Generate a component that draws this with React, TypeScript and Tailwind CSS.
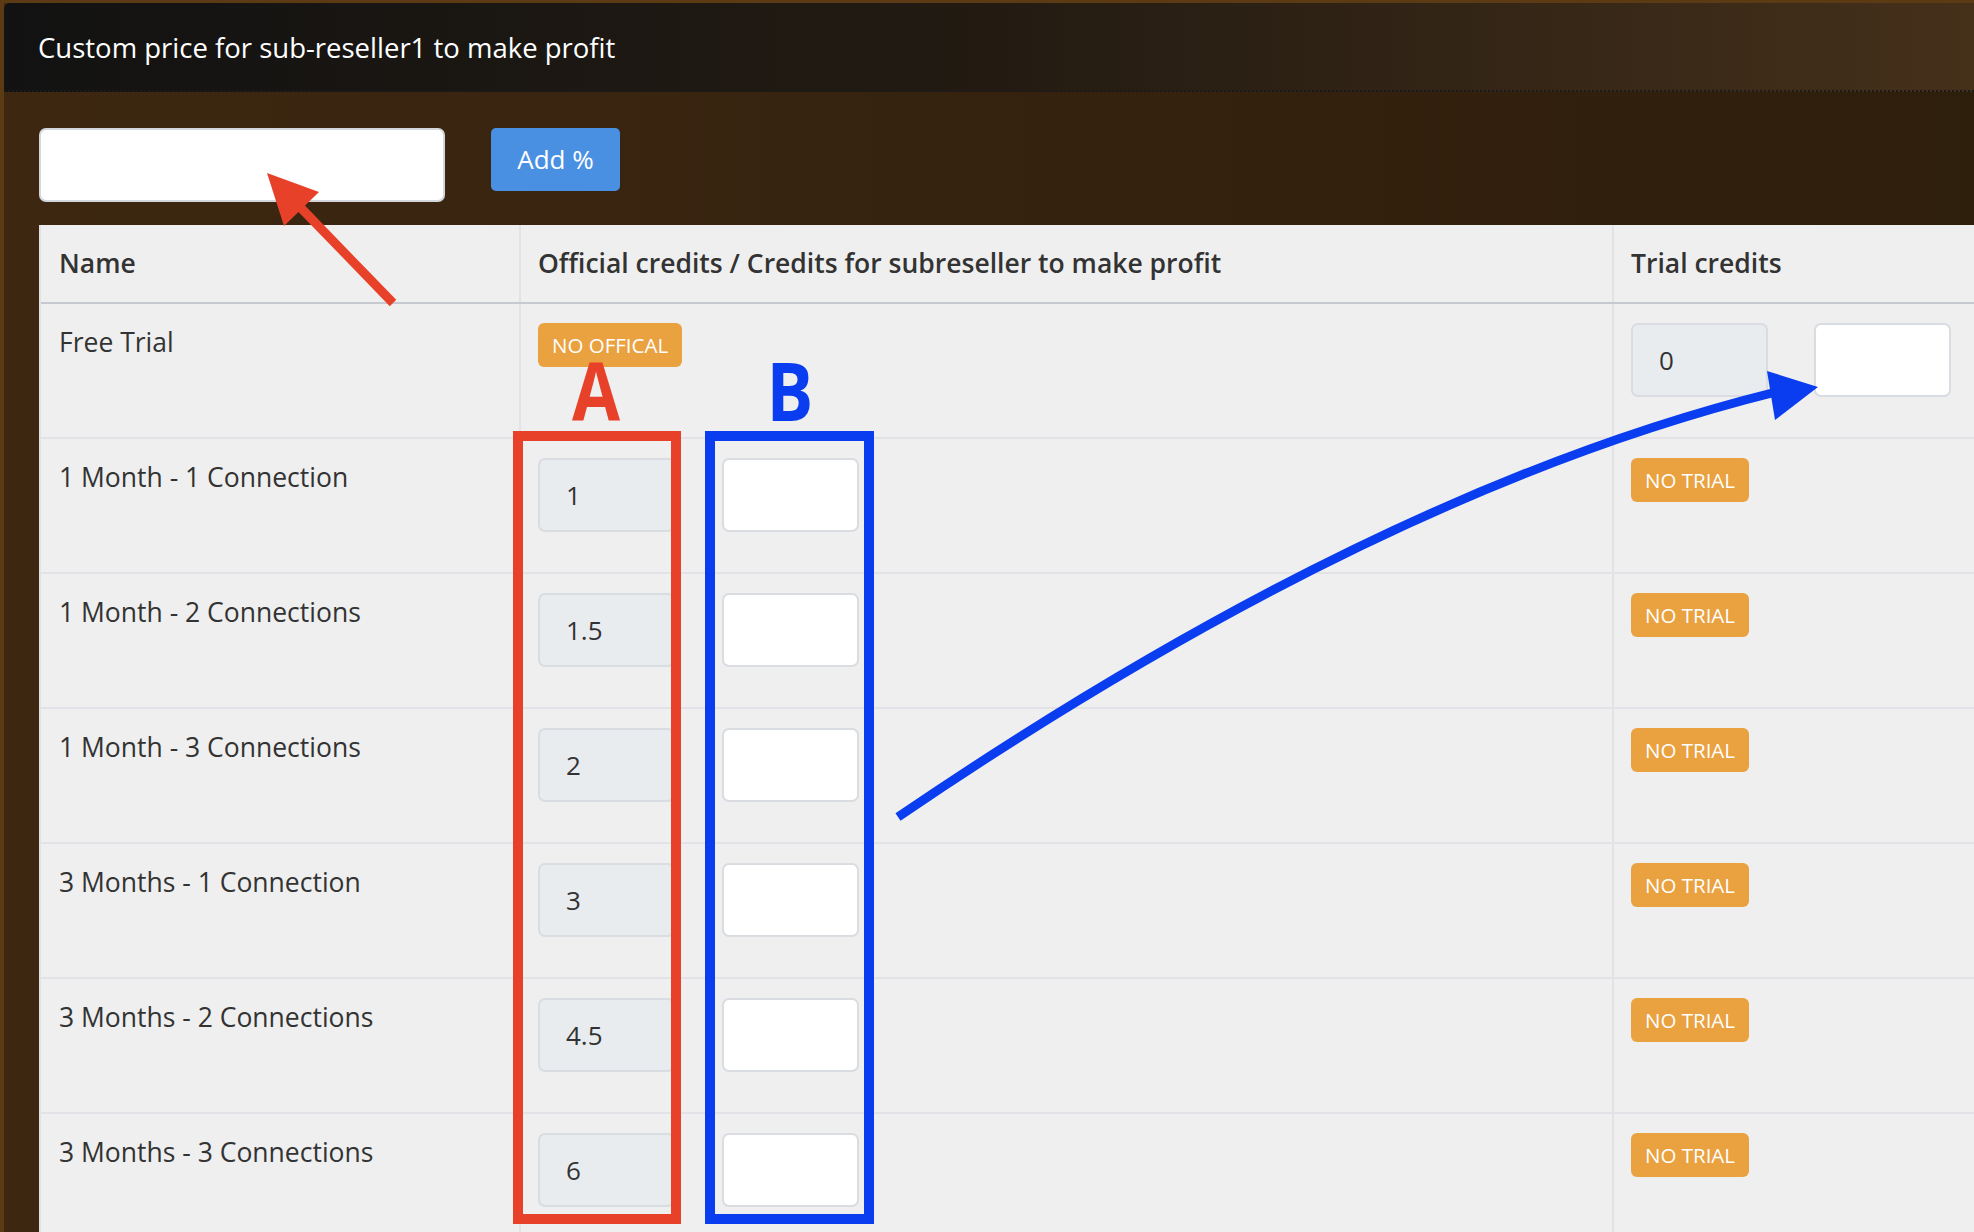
import React from "react";

interface PriceRow {
  name: string;
  official: string | null;
  trial: string | null;
}

const rows: PriceRow[] = [
  { name: "Free Trial", official: null, trial: "0" },
  { name: "1 Month - 1 Connection", official: "1", trial: null },
  { name: "1 Month - 2 Connections", official: "1.5", trial: null },
  { name: "1 Month - 3 Connections", official: "2", trial: null },
  { name: "3 Months - 1 Connection", official: "3", trial: null },
  { name: "3 Months - 2 Connections", official: "4.5", trial: null },
  { name: "3 Months - 3 Connections", official: "6", trial: null },
];

function Badge({ label }: { label: string }) {
  return (
    <span className="inline-flex h-[44px] items-center rounded-[6px] bg-[#eaa140] px-[14px] text-[20.5px] leading-none text-white">
      {label}
    </span>
  );
}

function ReadonlyInput({ value }: { value: string }) {
  return (
    <input
      readOnly
      value={value}
      className="h-[74px] w-[137px] rounded-[7px] border-2 border-[#d9dce0] bg-[#e9ecef] pl-[26px] text-[26px] text-[#333] outline-none"
    />
  );
}

function EmptyInput() {
  return (
    <input className="h-[74px] w-[137px] rounded-[7px] border-2 border-[#d9dce0] bg-white pl-[26px] text-[26px] text-[#333] outline-none" />
  );
}

// hand-drawn markup that sits over the screenshot
function Annotations() {
  return (
    <>
      <div className="pointer-events-none absolute left-[513px] top-[431px] h-[793px] w-[168px] border-[10px] border-[#e8412a]" />
      <div className="pointer-events-none absolute left-[705px] top-[431px] h-[793px] w-[169px] border-[10px] border-[#0a3cf0]" />
      <div className="pointer-events-none absolute left-[546px] top-[349px] w-[100px] scale-x-[0.86] text-center font-['Open_Sans',sans-serif] text-[81px] font-bold leading-[81px] text-[#e8412a]">
        A
      </div>
      <div className="pointer-events-none absolute left-[740px] top-[349px] w-[100px] scale-x-[0.86] text-center font-['Open_Sans',sans-serif] text-[81px] font-bold leading-[81px] text-[#0a3cf0]">
        B
      </div>
      <svg
        className="pointer-events-none absolute left-0 top-0"
        width="1974"
        height="1232"
        viewBox="0 0 1974 1232"
      >
        <line x1="393" y1="303" x2="300" y2="207" stroke="#e8412a" strokeWidth="9" />
        <polygon points="267,173 319,192 284,226" fill="#e8412a" />
        <path d="M 898 817 Q 1377 491 1776 392" stroke="#0a3cf0" strokeWidth="9" fill="none" />
        <polygon points="1818,387 1767,371 1775,420" fill="#0a3cf0" />
      </svg>
    </>
  );
}

export default function App() {
  return (
    <div className="relative h-[1232px] w-[1974px] overflow-hidden">
      <div className="h-full w-full border-l-4 border-t-[3px] border-[#5c3b14] bg-linear-to-r from-[#3d2711] to-[#2e1e0c] font-['Open_Sans',sans-serif]">
        <div className="flex h-[89px] items-center rounded-tl-[6px] border-b-2 border-dotted border-[#1c1a18] bg-linear-to-r from-[#121212] via-[#231b12] to-[#45301a] pl-[34px] pt-[2px]">
          <h1 className="text-[27.5px] font-medium text-white">Custom price for sub-reseller1 to make profit</h1>
        </div>

        <div className="pl-[35px] pt-[36px]">
          <div className="flex items-start gap-[46px]">
            <input className="h-[74px] w-[406px] rounded-[7px] border-2 border-[#d3d6da] bg-white outline-none" />
            <button className="h-[63px] w-[129px] rounded-[5px] bg-[#4a90e2] text-[26px] text-white">Add %</button>
          </div>

          <div className="mt-[23px] border-l-2 border-[#e2e2e6] bg-[#efefef] text-[#333]">
            <div className="grid h-[79px] grid-cols-[478px_1093px_1fr] border-b-2 border-[#c6cad0] text-[26.5px] font-semibold">
              <div className="flex items-center pl-[18px]">Name</div>
              <div className="flex items-center border-l-2 border-[#e3e3e7] pl-[17px]">
                Official credits / Credits for subreseller to make profit
              </div>
              <div className="flex items-center border-l-2 border-[#e3e3e7] pl-[17px]">Trial credits</div>
            </div>

            {rows.map((row) => (
              <div
                key={row.name}
                className="grid h-[135px] grid-cols-[478px_1093px_1fr] border-b-2 border-[#e3e3e7]"
              >
                <div className="pl-[18px] pt-[19px] text-[26.5px] leading-[39px]">{row.name}</div>
                <div className="border-l-2 border-[#e3e3e7] pl-[17px] pt-[19px]">
                  {row.official === null ? (
                    <Badge label="NO OFFICAL" />
                  ) : (
                    <div className="flex gap-[47px]">
                      <ReadonlyInput value={row.official} />
                      <EmptyInput />
                    </div>
                  )}
                </div>
                <div className="border-l-2 border-[#e3e3e7] pl-[17px] pt-[19px]">
                  {row.trial === null ? (
                    <Badge label="NO TRIAL" />
                  ) : (
                    <div className="flex gap-[46px]">
                      <ReadonlyInput value={row.trial} />
                      <EmptyInput />
                    </div>
                  )}
                </div>
              </div>
            ))}
          </div>
        </div>
      </div>

      <Annotations />
    </div>
  );
}
